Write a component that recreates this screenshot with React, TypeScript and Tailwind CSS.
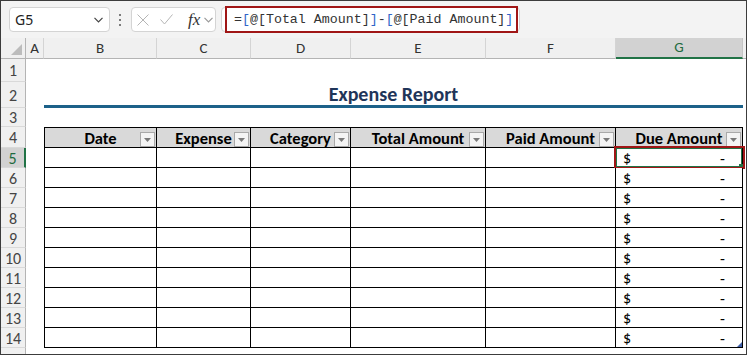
import React from "react";

const SANS = "[font-family:Carlito,Lato,'Noto_Sans',sans-serif]";

type Col = { k: string; w: string; label: string };
const cols: Col[] = [
  { k: "B", w: "w-[113px]", label: "Date" },
  { k: "C", w: "w-[94px]", label: "Expense" },
  { k: "D", w: "w-[100px]", label: "Category" },
  { k: "E", w: "w-[135px]", label: "Total Amount" },
  { k: "F", w: "w-[130px]", label: "Paid Amount" },
  { k: "G", w: "w-[127px]", label: "Due Amount" },
];

function Chevron({ color = "#555" }: { color?: string }) {
  return (
    <svg width="9" height="6" viewBox="0 0 9 6">
      <polyline points="0.5,0.8 4.5,4.8 8.5,0.8" fill="none" stroke={color} strokeWidth="1.2" />
    </svg>
  );
}

function DropBtn() {
  return (
    <div className="absolute right-[1px] top-[4px] w-[15px] h-[15px] border border-[#a9a9a9] bg-[#f4f4f4] flex items-center justify-center">
      <svg width="7" height="4" viewBox="0 0 7 4">
        <polygon points="0,0 7,0 3.5,4" fill="#7a7a7a" />
      </svg>
    </div>
  );
}

function RowHead({ n, h, sel }: { n: string; h: string; sel?: boolean }) {
  return (
    <div
      className={
        "w-[25px] shrink-0 flex items-center justify-center pt-[2px] text-[16px] leading-none border-b border-[#d9d9d9] " +
        h +
        (sel
          ? " bg-[#d2d2d2] text-[#1e6b40] border-r-2 border-r-[#217346]"
          : " bg-[#f0f0f0] text-[#444] border-r border-r-[#b4b4b4]")
      }
    >
      {n}
    </div>
  );
}

function TopBar() {
  return (
    <div className="h-[37px] shrink-0 bg-[#f3f3f3] flex items-center relative">
      <div className="ml-[8px] w-[101px] h-[25px] bg-white border border-[#d4d4d4] rounded-[4px] flex items-center pl-[5px] pr-[6px] justify-between">
        <span className="text-[14px] text-[#222] [font-family:'Noto_Sans',sans-serif]">G5</span>
        <Chevron color="#444" />
      </div>
      <div className="ml-[8px] w-[4px] h-[12px] flex flex-col justify-between items-center">
        <div className="w-[2px] h-[2px] bg-[#555] rounded-full" />
        <div className="w-[2px] h-[2px] bg-[#555] rounded-full" />
        <div className="w-[2px] h-[2px] bg-[#555] rounded-full" />
      </div>
      <div className="ml-[9px] w-[85px] h-[25px] bg-white border border-[#d4d4d4] rounded-[4px] flex items-center pl-[5px]">
        <svg width="12" height="12" viewBox="0 0 12 12">
          <line x1="0.5" y1="0.5" x2="11.5" y2="11.5" stroke="#b5b5b5" strokeWidth="1" />
          <line x1="11.5" y1="0.5" x2="0.5" y2="11.5" stroke="#b5b5b5" strokeWidth="1" />
        </svg>
        <svg className="ml-[11px]" width="13" height="11" viewBox="0 0 13 11">
          <polyline points="0.5,5.5 4.5,10 12.5,0.5" fill="none" stroke="#b5b5b5" strokeWidth="1" />
        </svg>
        <span className="ml-[15px] text-[17px] leading-none italic text-[#333] [font-family:'Liberation_Serif',serif]">fx</span>
        <span className="ml-[4px] mt-[1px]">
          <Chevron color="#9a9a9a" />
        </span>
      </div>
      <div className="ml-[5px] w-[299px] h-[25px] bg-white border border-[#d4d4d4] rounded-[4px] flex items-center pl-[12px] relative">
        <span className="text-[13.3px] text-[#333] [font-family:'Liberation_Mono',monospace] whitespace-pre">
          =<span className="text-[#2f64c8]">[</span>@[Total Amount]<span className="text-[#2f64c8]">]</span>-
          <span className="text-[#2f64c8]">[</span>@[Paid Amount]<span className="text-[#2f64c8]">]</span>
        </span>
        <div className="absolute left-[3px] top-[-2px] w-[293px] h-[27px] border-2 border-[#a01616]" />
      </div>
    </div>
  );
}

function ColHeads() {
  return (
    <div className={"h-[21px] shrink-0 flex bg-[#f0f0f0] text-[15px] text-[#333] " + SANS}>
      <div className="w-[25px] shrink-0 border-r border-b border-[#b4b4b4] relative">
        <svg className="absolute right-[3px] bottom-[3px]" width="11" height="11" viewBox="0 0 11 11">
          <polygon points="11,0 11,11 0,11" fill="#bcbcbc" />
        </svg>
      </div>
      <div className="w-[18px] shrink-0 border-r border-r-[#d4d4d4] border-b border-b-[#b4b4b4] flex items-center justify-center">
        A
      </div>
      {cols.map((c) =>
        c.k === "G" ? (
          <div
            key={c.k}
            className={c.w + " shrink-0 bg-[#d2d2d2] text-[#1e6b40] border-r border-r-[#c4c4c4] border-b-2 border-b-[#217346] flex items-center justify-center"}
          >
            {c.k}
          </div>
        ) : (
          <div
            key={c.k}
            className={c.w + " shrink-0 border-r border-r-[#d4d4d4] border-b border-b-[#b4b4b4] flex items-center justify-center"}
          >
            {c.k}
          </div>
        )
      )}
      <div className="flex-1 border-b border-[#b4b4b4]" />
    </div>
  );
}

function EmptyRow({ n, h }: { n: string; h: string }) {
  return (
    <div className={"flex shrink-0 " + h}>
      <RowHead n={n} h={h} />
      <div className="flex-1 bg-white" />
    </div>
  );
}

function TitleRow() {
  return (
    <div className="flex shrink-0 h-[26px]">
      <RowHead n="2" h="h-[26px]" />
      <div className="w-[18px] shrink-0 bg-white" />
      <div className="w-[699px] shrink-0 bg-white border-b-[3px] border-[#1c6189] flex items-center justify-center pt-[1px]">
        <span className="text-[20px] font-bold text-[#1f3559] leading-none">Expense Report</span>
      </div>
      <div className="flex-1 bg-white" />
    </div>
  );
}

function HeaderRow() {
  return (
    <div className="flex shrink-0 h-[21px]">
      <RowHead n="4" h="h-[21px]" />
      <div className="w-[18px] shrink-0 bg-white" />
      {cols.map((c, i) => (
        <div
          key={c.k}
          className={
            c.w +
            " shrink-0 relative bg-[#d9d9d9] border-t border-b border-r border-black flex items-center justify-center pt-[2px] text-[16.5px] font-bold text-black" +
            (i === 0 ? " border-l" : "")
          }
        >
          <span className="leading-none">{c.label}</span>
          <DropBtn />
        </div>
      ))}
      <div className="flex-1 bg-white" />
    </div>
  );
}

function DataRow({ n, sel }: { n: number; sel?: boolean }) {
  return (
    <div className="flex shrink-0 h-[20px]">
      <RowHead n={String(n)} h="h-[20px]" sel={sel} />
      <div className="w-[18px] shrink-0 bg-white" />
      {cols.map((c, i) => (
        <div
          key={c.k}
          className={
            c.w +
            " shrink-0 relative bg-white border-b border-r border-black" +
            (i === 0 ? " border-l" : "")
          }
        >
          {c.k === "G" && (
            <div className="h-full flex items-center justify-between pl-[7px] pr-[17px] pt-[2px] text-[16px] leading-none text-black">
              <span>$</span>
              <span>-</span>
            </div>
          )}
          {c.k === "G" && sel && (
            <>
              <div className="absolute left-0 top-0 right-0 bottom-0 border border-[#217346]" />
              <div className="absolute right-[-1px] bottom-[-1px] w-[4px] h-[4px] bg-[#217346]" />
              <div className="absolute left-[-2px] top-[-2px] right-[-3px] bottom-[-2px] border-2 border-[#a01616]" />
            </>
          )}
          {c.k === "G" && n === 14 && (
            <svg className="absolute right-[0px] bottom-[0px]" width="5" height="5" viewBox="0 0 5 5">
              <polygon points="5,0 5,5 0,5" fill="#3f5fa8" />
            </svg>
          )}
        </div>
      ))}
      <div className="flex-1 bg-white" />
    </div>
  );
}

export default function App() {
  const rows = [5, 6, 7, 8, 9, 10, 11, 12, 13, 14];
  return (
    <div className="w-[750px] h-[356px] bg-white overflow-hidden">
      <div className="w-[747px] h-[355px] border border-[#3c3c3c] flex flex-col bg-white overflow-hidden">
        <TopBar />
        <ColHeads />
        <div className={"flex flex-col flex-1 " + SANS}>
          <EmptyRow n="1" h="h-[23px]" />
          <TitleRow />
          <EmptyRow n="3" h="h-[19px]" />
          <HeaderRow />
          {rows.map((n) => (
            <DataRow key={n} n={n} sel={n === 5} />
          ))}
          <div className="flex flex-1">
            <div className="w-[25px] shrink-0 bg-[#f0f0f0] border-r border-[#b4b4b4]" />
            <div className="flex-1 bg-white" />
          </div>
        </div>
      </div>
    </div>
  );
}
